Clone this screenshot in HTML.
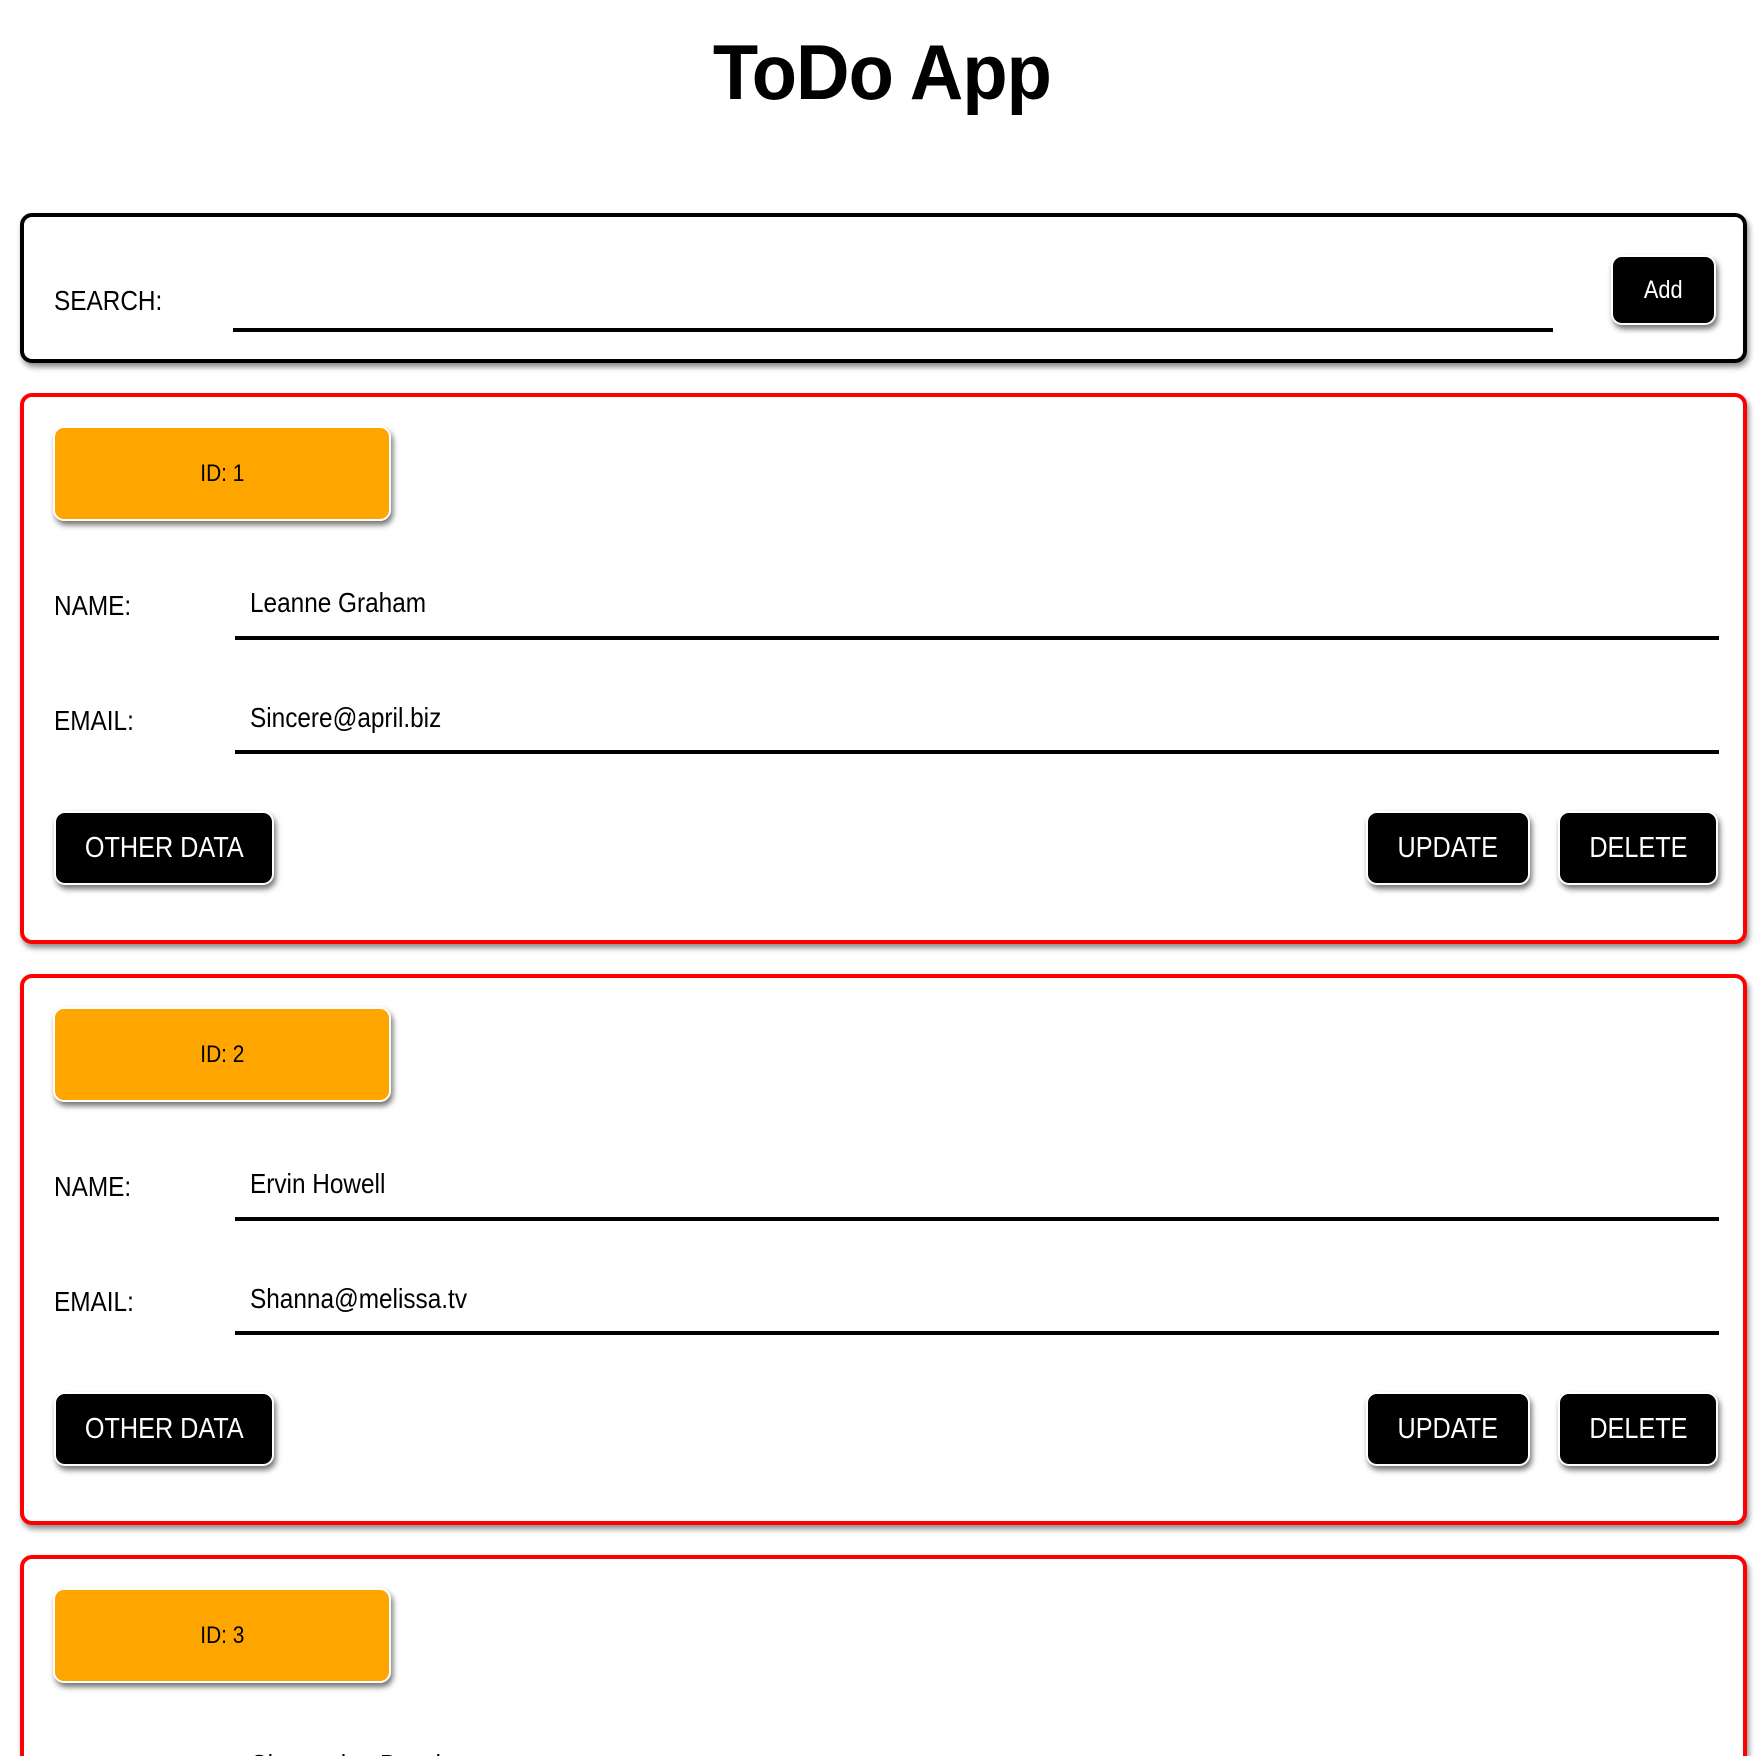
<!DOCTYPE html>
<html><head><meta charset="utf-8"><style>
*{box-sizing:border-box;margin:0;padding:0}
html,body{width:1764px;height:1756px;overflow:hidden;background:#fff}
body{font-family:"Liberation Sans",sans-serif;color:#000}
#wrap{position:relative;width:1764px;height:1756px;overflow:hidden}
h1{position:absolute;left:0;width:1764px;top:22px;text-align:center;font-weight:bold;font-size:78px;line-height:100px;letter-spacing:-1px}
h1 span{display:inline-block;transform:scaleX(.95)}
.box{position:absolute;left:20px;width:1727px;border-radius:12px;box-shadow:2px 4px 6px rgba(0,0,0,.45);background:#fff}
.lbl{position:absolute;font-size:28px;line-height:32px;transform:scaleX(.87);transform-origin:left center;white-space:nowrap}
.line{position:absolute;height:4px;background:#000}
.btn{position:absolute;background:#000;color:#fff;border:2px solid #fff;border-radius:11px;box-shadow:2px 4px 6px rgba(0,0,0,.55);display:flex;align-items:center;justify-content:center;font-size:29px;white-space:nowrap}
.btn span,.id span{display:inline-block;transform:scaleX(.87)}
.id{position:absolute;left:29px;top:29px;width:338px;height:95px;background:#FFA500;border:2px solid #fff;border-radius:11px;box-shadow:2px 4px 6px rgba(0,0,0,.55);display:flex;align-items:center;justify-content:center;font-size:24px}
</style></head><body><div id="wrap">
<h1><span>ToDo App</span></h1>
<div class="box" style="top:213px;height:150px;border:4px solid #000">
  <div class="lbl" style="left:30px;top:68px">SEARCH:</div>
  <div class="line" style="left:209px;top:111px;width:1320px"></div>
  <div class="btn" style="left:1587px;top:38px;width:105px;height:70px;font-size:25px"><span>Add</span></div>
</div>

<div class="box" style="top:393px;height:551px;border:4px solid #f00">
  <div class="id"><span>ID: 1</span></div>
  <div class="lbl" style="left:30px;top:193px">NAME:</div>
  <div class="lbl" style="left:226px;top:190px">Leanne Graham</div>
  <div class="line" style="left:211px;top:239px;width:1484px"></div>
  <div class="lbl" style="left:30px;top:308px">EMAIL:</div>
  <div class="lbl" style="left:226px;top:305px">Sincere@april.biz</div>
  <div class="line" style="left:211px;top:353px;width:1484px"></div>
  <div class="btn" style="left:30px;top:414px;width:220px;height:74px"><span>OTHER DATA</span></div>
  <div class="btn" style="left:1342px;top:414px;width:164px;height:74px"><span>UPDATE</span></div>
  <div class="btn" style="left:1534px;top:414px;width:160px;height:74px"><span>DELETE</span></div>
</div>

<div class="box" style="top:974px;height:551px;border:4px solid #f00">
  <div class="id"><span>ID: 2</span></div>
  <div class="lbl" style="left:30px;top:193px">NAME:</div>
  <div class="lbl" style="left:226px;top:190px">Ervin Howell</div>
  <div class="line" style="left:211px;top:239px;width:1484px"></div>
  <div class="lbl" style="left:30px;top:308px">EMAIL:</div>
  <div class="lbl" style="left:226px;top:305px">Shanna@melissa.tv</div>
  <div class="line" style="left:211px;top:353px;width:1484px"></div>
  <div class="btn" style="left:30px;top:414px;width:220px;height:74px"><span>OTHER DATA</span></div>
  <div class="btn" style="left:1342px;top:414px;width:164px;height:74px"><span>UPDATE</span></div>
  <div class="btn" style="left:1534px;top:414px;width:160px;height:74px"><span>DELETE</span></div>
</div>

<div class="box" style="top:1555px;height:551px;border:4px solid #f00">
  <div class="id"><span>ID: 3</span></div>
  <div class="lbl" style="left:30px;top:193px">NAME:</div>
  <div class="lbl" style="left:226px;top:190px">Clementine Bauch</div>
</div>
</div></body></html>
